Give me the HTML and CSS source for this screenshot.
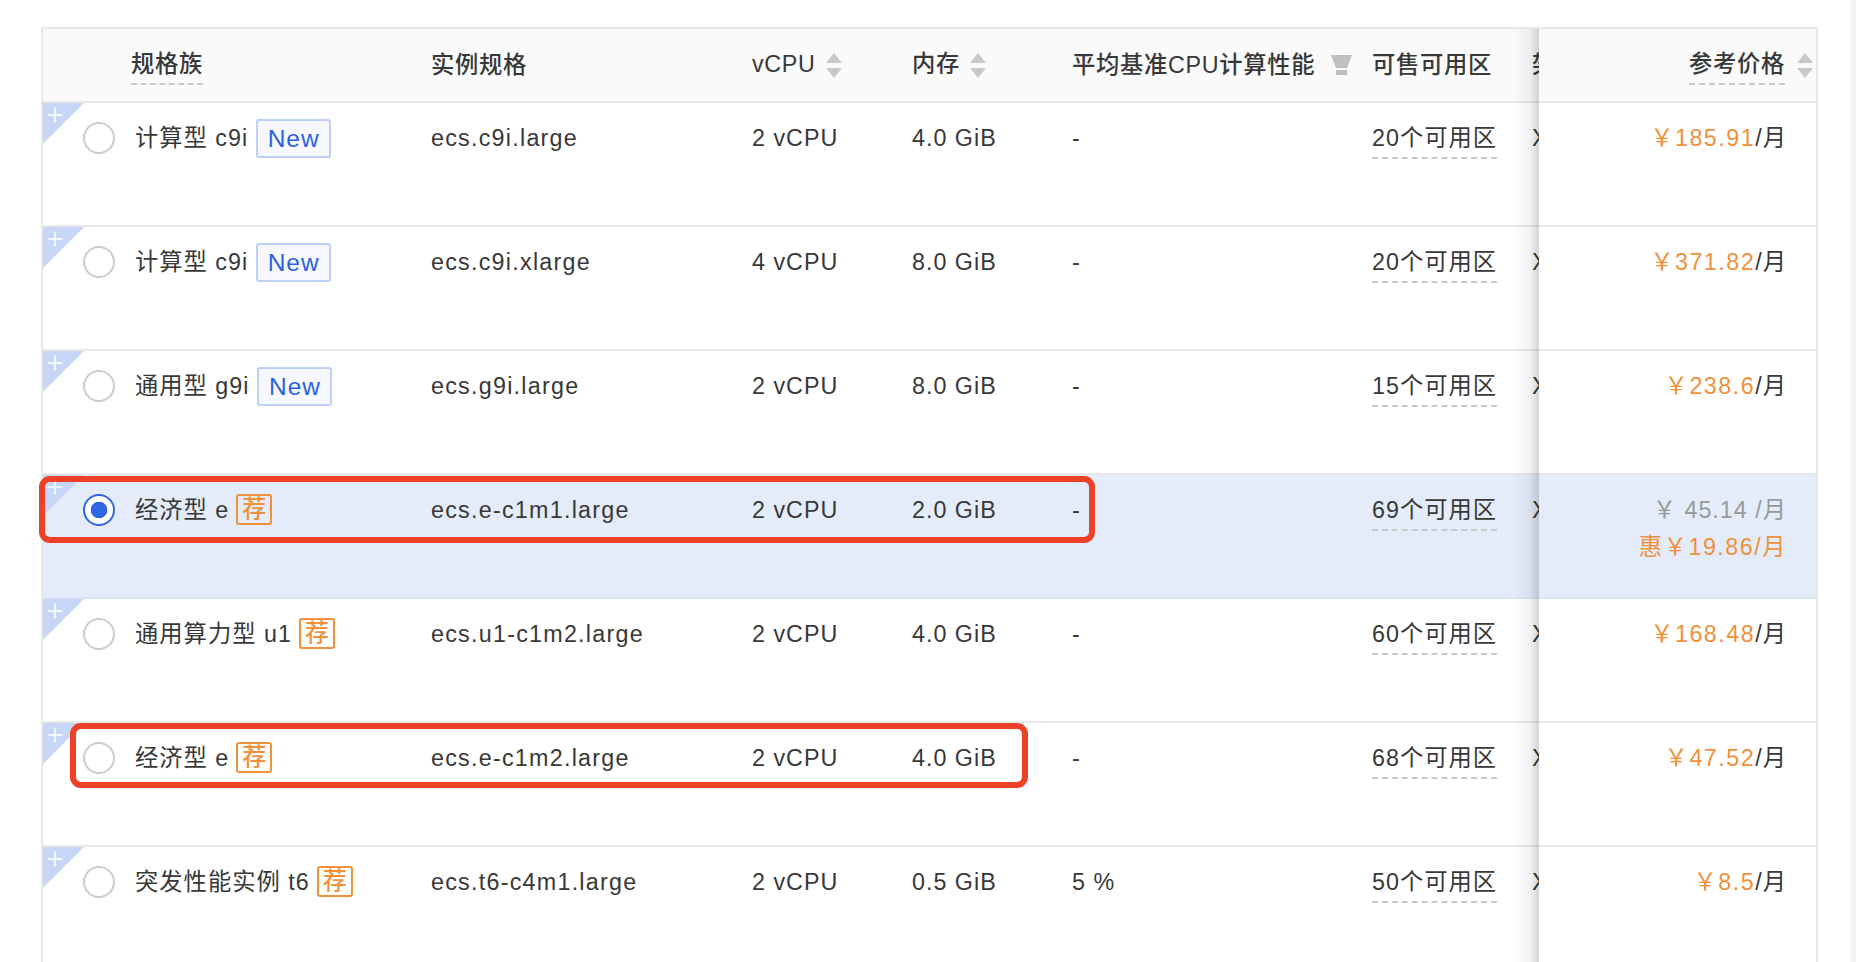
FILE: index.html
```html
<!DOCTYPE html>
<html lang="zh-CN">
<head>
<meta charset="utf-8">
<title>实例规格</title>
<link rel="stylesheet" href="styles.css">
</head>
<body>
<svg class="defs" width="0" height="0" aria-hidden="true">
  <defs>
    <g id="plus"><path d="M8 0.5V15.5M0.5 8H15.5" stroke="#fff" stroke-width="1.6" fill="none"/></g>
  </defs>
</svg>
<div class="table">
  <div class="row head">
    <div class="cell"></div>
    <div class="cell"><span class="tip">规格族</span></div>
    <div class="cell h-spec">实例规格</div>
    <div class="cell h-sort">vCPU<span class="sort"><i class="up"></i><i class="down"></i></span></div>
    <div class="cell h-sort">内存<span class="sort"><i class="up"></i><i class="down"></i></span></div>
    <div class="cell h-spec">平均基准CPU计算性能<svg class="funnel" width="21" height="20" viewBox="0 0 21 20"><path d="M0 0H21L16 13H5Z M5 15H16V20H5Z" fill="#bfbfbf"/></svg></div>
    <div class="cell h-spec">可售可用区</div>
    <div class="cell clip h-spec">架构</div>
    <div class="cell fixed"><span class="tip">参考价格</span><span class="sort"><i class="up"></i><i class="down"></i></span></div>
  </div>

  <div class="row">
    <div class="cell pick"><svg class="corner" width="41" height="41" viewBox="0 0 41 41"><path d="M0 0H41L0 41Z" fill="#c7d6f6"/><use href="#plus" x="4" y="4"/></svg><span class="radio"></span></div>
    <div class="cell name">计算型 c9i<span class="new">New</span></div>
    <div class="cell spec">ecs.c9i.large</div><div class="cell">2 vCPU</div><div class="cell">4.0 GiB</div><div class="cell">-</div>
    <div class="cell"><span class="zone">20个可用区</span></div><div class="cell clip">X86</div>
    <div class="cell fixed"><span class="money">￥185.91</span>/月</div>
  </div>

  <div class="row">
    <div class="cell pick"><svg class="corner" width="41" height="41" viewBox="0 0 41 41"><path d="M0 0H41L0 41Z" fill="#c7d6f6"/><use href="#plus" x="4" y="4"/></svg><span class="radio"></span></div>
    <div class="cell name">计算型 c9i<span class="new">New</span></div>
    <div class="cell spec">ecs.c9i.xlarge</div><div class="cell">4 vCPU</div><div class="cell">8.0 GiB</div><div class="cell">-</div>
    <div class="cell"><span class="zone">20个可用区</span></div><div class="cell clip">X86</div>
    <div class="cell fixed"><span class="money">￥371.82</span>/月</div>
  </div>

  <div class="row">
    <div class="cell pick"><svg class="corner" width="41" height="41" viewBox="0 0 41 41"><path d="M0 0H41L0 41Z" fill="#c7d6f6"/><use href="#plus" x="4" y="4"/></svg><span class="radio"></span></div>
    <div class="cell name">通用型 g9i<span class="new">New</span></div>
    <div class="cell spec">ecs.g9i.large</div><div class="cell">2 vCPU</div><div class="cell">8.0 GiB</div><div class="cell">-</div>
    <div class="cell"><span class="zone">15个可用区</span></div><div class="cell clip">X86</div>
    <div class="cell fixed"><span class="money">￥238.6</span>/月</div>
  </div>

  <div class="row selected">
    <div class="cell pick"><svg class="corner" width="41" height="41" viewBox="0 0 41 41"><path d="M0 0H41L0 41Z" fill="#c7d6f6"/><use href="#plus" x="4" y="4"/></svg><span class="radio on"></span></div>
    <div class="cell name">经济型 e<span class="rec">荐</span></div>
    <div class="cell spec">ecs.e-c1m1.large</div><div class="cell">2 vCPU</div><div class="cell">2.0 GiB</div><div class="cell">-</div>
    <div class="cell"><span class="zone">69个可用区</span></div><div class="cell clip">X86</div>
    <div class="cell fixed"><div class="old">￥ 45.14 /月</div><div class="money deal">惠￥19.86/月</div></div>
    <div class="mark mark-a"></div>
  </div>

  <div class="row">
    <div class="cell pick"><svg class="corner" width="41" height="41" viewBox="0 0 41 41"><path d="M0 0H41L0 41Z" fill="#c7d6f6"/><use href="#plus" x="4" y="4"/></svg><span class="radio"></span></div>
    <div class="cell name">通用算力型 u1<span class="rec">荐</span></div>
    <div class="cell spec">ecs.u1-c1m2.large</div><div class="cell">2 vCPU</div><div class="cell">4.0 GiB</div><div class="cell">-</div>
    <div class="cell"><span class="zone">60个可用区</span></div><div class="cell clip">X86</div>
    <div class="cell fixed"><span class="money">￥168.48</span>/月</div>
  </div>

  <div class="row">
    <div class="cell pick"><svg class="corner" width="41" height="41" viewBox="0 0 41 41"><path d="M0 0H41L0 41Z" fill="#c7d6f6"/><use href="#plus" x="4" y="4"/></svg><span class="radio"></span></div>
    <div class="cell name">经济型 e<span class="rec">荐</span></div>
    <div class="cell spec">ecs.e-c1m2.large</div><div class="cell">2 vCPU</div><div class="cell">4.0 GiB</div><div class="cell">-</div>
    <div class="cell"><span class="zone">68个可用区</span></div><div class="cell clip">X86</div>
    <div class="cell fixed"><span class="money">￥47.52</span>/月</div>
    <div class="mark mark-b"></div>
  </div>

  <div class="row last">
    <div class="cell pick"><svg class="corner" width="41" height="41" viewBox="0 0 41 41"><path d="M0 0H41L0 41Z" fill="#c7d6f6"/><use href="#plus" x="4" y="4"/></svg><span class="radio"></span></div>
    <div class="cell name">突发性能实例 t6<span class="rec">荐</span></div>
    <div class="cell spec">ecs.t6-c4m1.large</div><div class="cell">2 vCPU</div><div class="cell">0.5 GiB</div><div class="cell">5 %</div>
    <div class="cell"><span class="zone">50个可用区</span></div><div class="cell clip">X86</div>
    <div class="cell fixed"><span class="money">￥8.5</span>/月</div>
  </div>
</div>
<div class="rail"></div>
</body>
</html>
```

FILE: styles.css
```css
html, body {
  margin: 0;
  height: 962px;
  overflow: hidden;
  background: #fff;
}
body {
  display: flex;
  font-family: "Liberation Sans", "Noto Sans CJK SC", sans-serif;
  font-size: 23.3px;
  letter-spacing: 1px;
  color: #383838;
  padding: 27px 0 0 41px;
  box-sizing: border-box;
}
.defs { position: absolute; }
.table {
  width: 1777px;
  flex: none;
  border: solid #e8e8e8;
  border-width: 2px 2px 0;
  box-sizing: border-box;
  height: 935px;
}
.rail {
  margin: -27px 0 0 33px;
  flex: 1;
  background: #f1f2f8;
}
.row {
  display: grid;
  grid-template-columns: 88px 300px 321px 160px 160px 300px 160px 7px 277px;
  height: 124px;
  box-sizing: border-box;
  border-bottom: 2px solid #e8e8e8;
  position: relative;
  background: #fff;
}
.row.head {
  height: 74px;
  background: #fafafa;
}
.row.selected { background: #e4ecfa; border-bottom-color: #dde4f2; }
.row.last { height: 115px; border-bottom: 0; }
.cell {
  padding-top: 15.5px;
  line-height: 39px;
  white-space: nowrap;
  min-width: 0;
}
.head .cell {
  padding-top: 15px;
  font-weight: 500;
  letter-spacing: 0.7px;
  display: flex;
  align-items: flex-start;
}
.tip {
  display: inline-block;
  padding-top: 1px;
  line-height: 38px;
  border-bottom: 2px dashed #c9c9c9;
}
.head .h-spec { padding-top: 17px; }
.head .h-sort { padding-top: 16px; }
.sort {
  display: inline-flex;
  flex-direction: column;
  gap: 5px;
  margin: 8px 0 0 10px;
}
.fixed .sort { margin: 9px 0 0 12px; }
.sort i {
  display: block;
  width: 0;
  height: 0;
  border-left: 8px solid transparent;
  border-right: 8px solid transparent;
}
.sort .up { border-bottom: 10px solid #c8c8c8; }
.sort .down { border-top: 10px solid #c8c8c8; }
.funnel { margin: 9px 0 0 16px; flex: none; }
.pick { padding: 19px 0 0 40px; }
.corner { position: absolute; left: 0; top: 0; }
.radio {
  display: block;
  position: relative;
  width: 32px;
  height: 32px;
  box-sizing: border-box;
  border: 2px solid #cccccc;
  border-radius: 50%;
  background: #fff;
}
.radio.on {
  border-color: #2e66e4;
  background: radial-gradient(circle, #2e66e4 0 8px, #fff 8.6px);
}
.name { padding-left: 4px; display: flex; align-items: flex-start; }
.spec { letter-spacing: 1.25px; }
.new {
  margin-left: 8px;
  width: 75px;
  height: 39px;
  box-sizing: border-box;
  border: 2px solid #bcd0f8;
  border-radius: 3px;
  background: #f6f8fe;
  color: #2a62e0;
  font-size: 24.5px;
  line-height: 35px;
  text-align: center;
}
.rec {
  margin: 3px 0 0 7px;
  width: 36px;
  height: 31px;
  box-sizing: border-box;
  border: 2px solid #f0903a;
  border-radius: 3px;
  color: #f0903a;
  font-size: 24px;
  font-weight: 500;
  line-height: 26px;
  text-align: center;
  letter-spacing: 0;
}
.zone {
  display: inline-block;
  line-height: 38px;
  border-bottom: 2px dashed #c9c9c9;
}
.clip { overflow: hidden; }
.fixed {
  position: relative;
  background: inherit;
  text-align: right;
  padding-right: 29px;
  box-sizing: border-box;
  margin-bottom: -2px;
  border-bottom: 2px solid #e8e8e8;
}
.fixed::before {
  content: "";
  position: absolute;
  top: 0;
  bottom: -2px;
  right: 100%;
  width: 26px;
  background: linear-gradient(to left, rgba(0, 0, 0, 0.17), rgba(0, 0, 0, 0.05) 35%, rgba(0, 0, 0, 0));
}
.head .fixed { justify-content: flex-end; padding-right: 3px; }
.selected .fixed { border-bottom-color: #dde4f2; }
.last .fixed { border-bottom: 0; margin-bottom: 0; }
.money { color: #f0903a; letter-spacing: 1.5px; }
.old { color: #999; }
.deal { margin-top: -2px; }
.mark {
  position: absolute;
  box-sizing: border-box;
  border: 6px solid #ec4127;
  border-radius: 11px;
  z-index: 3;
}
.mark-a { left: -4px; top: 1px; width: 1056px; height: 67px; }
.mark-b { left: 27px; top: 0; width: 958px; height: 65px; }
```
